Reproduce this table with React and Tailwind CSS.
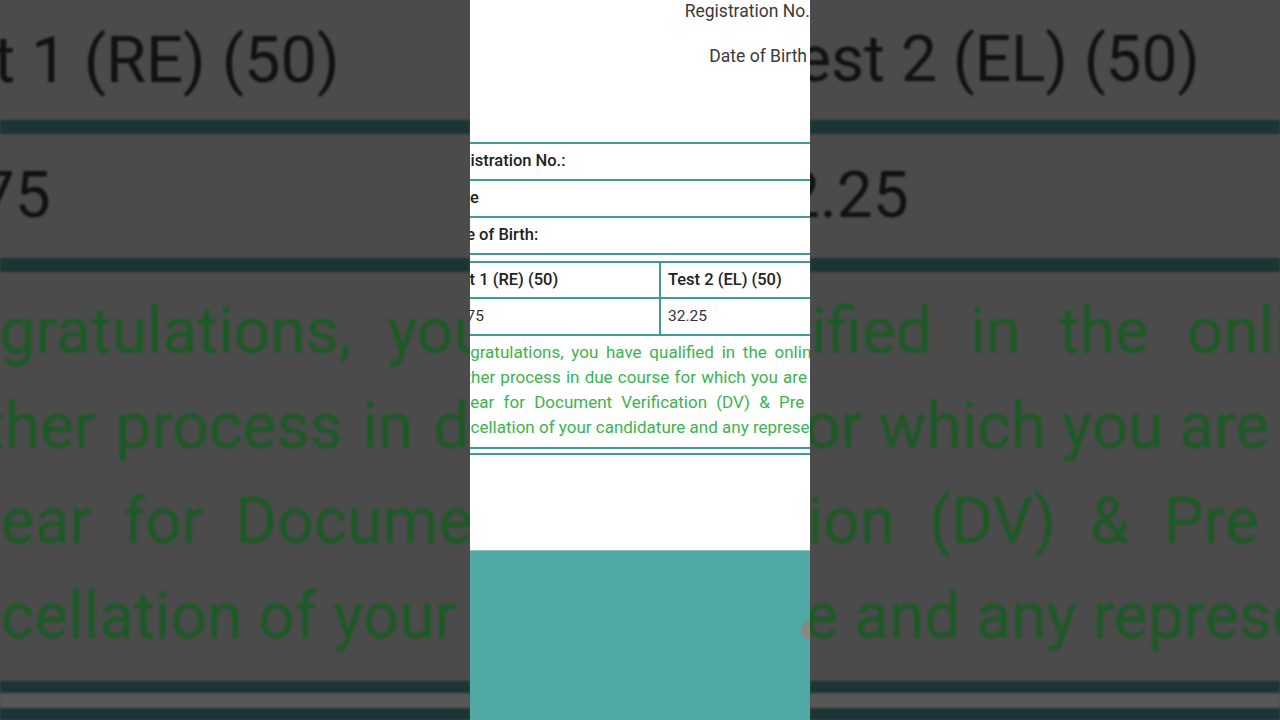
import React from "react";

const teal = "border-[#3f9a98]";

const SideLeft = () => (
  <div className="w-[470px] h-[720px] bg-[#4b4b4b] overflow-hidden">
    <div className="blur-[1px] flex flex-col">
      <div className="h-[120px] leading-[120px] text-[65px] text-[#111] whitespace-nowrap -ml-[110px]">
        Test 1 (RE) (50)
      </div>
      <div className="h-[14px] bg-[#1b3534]" />
      <div className="h-[124px] leading-[124px] text-[64px] text-[#111] whitespace-nowrap -ml-[110px]">
        33.75
      </div>
      <div className="h-[14px] bg-[#1b3534]" />
      <div className="pt-[12px] text-[64px] leading-[95px] text-[#1c5a25] whitespace-nowrap">
        <div className="-ml-[114px] [word-spacing:20px]">Congratulations, you have</div>
        <div className="-ml-[97px] [word-spacing:4px]">further process in due course</div>
        <div className="-ml-[106px] [word-spacing:16px]">appear for Document</div>
        <div className="-ml-[103px]">cancellation of your candidature</div>
      </div>
      <div className="mt-[17px] h-[12px] bg-[#1b3534]" />
      <div className="h-[15px] bg-[#575757]" />
      <div className="h-[12px] bg-[#1b3534]" />
    </div>
  </div>
);

const SideRight = () => (
  <div className="w-[470px] h-[720px] bg-[#4b4b4b] overflow-hidden">
    <div className="blur-[1px] flex flex-col">
      <div className="h-[120px] leading-[120px] text-[64px] text-[#111] whitespace-nowrap -ml-[48px]">
        Test 2 (EL) (50)
      </div>
      <div className="h-[14px] bg-[#1b3534]" />
      <div className="h-[124px] leading-[124px] text-[64px] text-[#111] whitespace-nowrap -ml-[62px]">
        32.25
      </div>
      <div className="h-[14px] bg-[#1b3534]" />
      <div className="pt-[12px] text-[64px] leading-[95px] text-[#1c5a25] whitespace-nowrap">
        <div className="-ml-[121px] [word-spacing:22px]">qualified in the online</div>
        <div className="-ml-[28px]">for which you are</div>
        <div className="-ml-[58px] [word-spacing:18px]">ation (DV) &amp; Pre</div>
        <div className="-ml-[62px]">ure and any representation</div>
      </div>
      <div className="mt-[17px] h-[12px] bg-[#1b3534]" />
      <div className="h-[15px] bg-[#575757]" />
      <div className="h-[12px] bg-[#1b3534]" />
    </div>
  </div>
);

const Center = () => (
  <div className="w-[340px] h-[720px] bg-white overflow-hidden relative flex flex-col">
    <div className="h-[550px] flex flex-col">
      <div className="flex flex-col items-end text-[17.5px] leading-[22px] text-[#3a3a3a] whitespace-nowrap">
        <div className="-mr-[4px]">Registration No.:</div>
        <div className="mt-[23px] mr-[3px]">Date of Birth</div>
      </div>

      <div className="mt-[75px] -ml-[45px] w-[430px] text-[16.5px] text-[#222] whitespace-nowrap">
        <div className={`border-t-2 ${teal} h-[37px] flex items-center pl-[17px] font-medium`}>Registration No.:</div>
        <div className={`border-t-2 ${teal} h-[37px] flex items-center pl-[10px] font-medium`}>Name</div>
        <div className={`border-t-2 ${teal} h-[37px] flex items-center pl-[16px] font-medium`}>Date of Birth:</div>
        <div className={`border-t-2 ${teal} h-[8px]`} />

        <div className={`border-t-2 ${teal} flex`}>
          <div className={`w-[236px] border-r-2 ${teal} h-[34px] flex items-center pl-[18px] font-medium`}>Test 1 (RE) (50)</div>
          <div className="h-[34px] flex items-center pl-[7px] font-medium">Test 2 (EL) (50)</div>
        </div>
        <div className={`border-t-2 ${teal} flex`}>
          <div className={`w-[236px] border-r-2 ${teal} h-[35px] flex items-center pl-[20px] text-[15.5px] text-[#333]`}>33.75</div>
          <div className="h-[35px] flex items-center pl-[7px] text-[15.5px] text-[#333]">32.25</div>
        </div>
        <div className={`border-t-2 ${teal}`} />
      </div>

      <div className="h-[111px] pt-[4px] text-[17px] leading-[25px] text-[#3cb34f] whitespace-nowrap">
        <div className="-ml-[30px] [word-spacing:3.5px]">Congratulations, you have qualified in the online</div>
        <div className="-ml-[26px] [word-spacing:1px]">further process in due course for which you are</div>
        <div className="-ml-[28px] [word-spacing:5px]">appear for Document Verification (DV) &amp; Pre</div>
        <div className="-ml-[27px]">cancellation of your candidature and any representation</div>
      </div>
      <div className={`border-t-2 ${teal} h-[6px]`} />
      <div className={`border-t-2 ${teal}`} />
    </div>

    <div className="flex-1 bg-[#50a9a5] border-t border-[#8cc7c4] relative">
      <div className="absolute left-[331px] top-[69px] w-[20px] h-[20px] rounded-full bg-[#8e8781]" />
    </div>
  </div>
);

export default function App() {
  return (
    <div className="w-[1280px] h-[720px] flex overflow-hidden font-[Roboto,sans-serif]">
      <SideLeft />
      <Center />
      <SideRight />
    </div>
  );
}
